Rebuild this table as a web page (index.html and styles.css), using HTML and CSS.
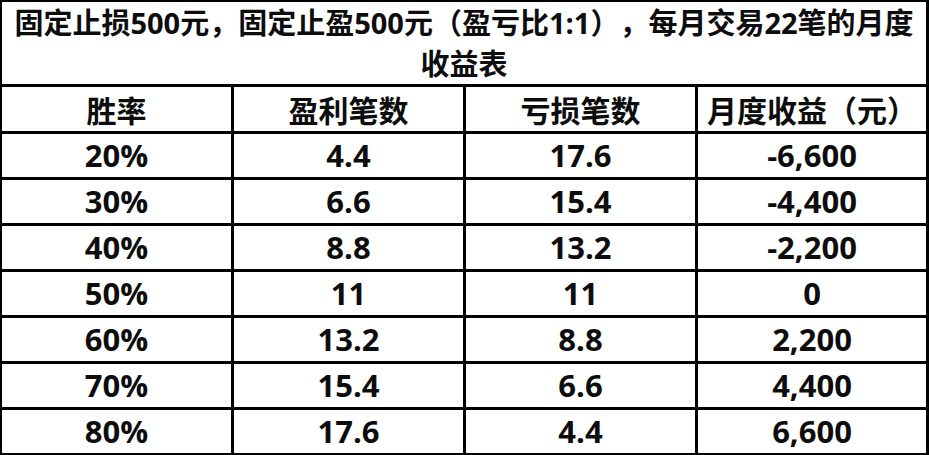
FILE: index.html
```html
<!DOCTYPE html>
<html lang="zh-CN">
<head>
<meta charset="utf-8">
<title>月度收益表</title>
<link rel="stylesheet" href="styles.css">
</head>
<body>
<div class="sheet">
  <div class="cell title">固定止损500元，固定止盈500元（盈亏比1:1），每月交易22笔的月度<br>收益表</div>
  <div class="cell head">胜率</div>
  <div class="cell head">盈利笔数</div>
  <div class="cell head">亏损笔数</div>
  <div class="cell head">月度收益（元）</div>

  <div class="cell">20%</div><div class="cell">4.4</div><div class="cell">17.6</div><div class="cell">-6,600</div>
  <div class="cell">30%</div><div class="cell">6.6</div><div class="cell">15.4</div><div class="cell">-4,400</div>
  <div class="cell">40%</div><div class="cell">8.8</div><div class="cell">13.2</div><div class="cell">-2,200</div>
  <div class="cell">50%</div><div class="cell">11</div><div class="cell">11</div><div class="cell">0</div>
  <div class="cell">60%</div><div class="cell">13.2</div><div class="cell">8.8</div><div class="cell">2,200</div>
  <div class="cell">70%</div><div class="cell">15.4</div><div class="cell">6.6</div><div class="cell">4,400</div>
  <div class="cell">80%</div><div class="cell">17.6</div><div class="cell">4.4</div><div class="cell">6,600</div>
</div>
</body>
</html>
```

FILE: styles.css
```css
html, body {
  margin: 0;
  padding: 0;
  background: #ffffff;
}

.sheet {
  width: 929px;
  height: 455px;
  box-sizing: border-box;
  padding: 2px 3px 2px 2px;
  background: #000000;
  display: grid;
  grid-template-columns: 229px 229px 229px 228px;
  grid-template-rows: 82px 44px repeat(7, 43px);
  gap: 3px;
  font-family: "Open Sans", "Noto Sans CJK SC", sans-serif;
  font-weight: 700;
  color: #0d0d0d;
  text-spacing-trim: space-all;
}

.cell {
  background: #ffffff;
  display: flex;
  align-items: center;
  justify-content: center;
  text-align: center;
  font-size: 31px;
  line-height: 1;
  white-space: nowrap;
}

.title {
  grid-column: 1 / -1;
  font-size: 29px;
  line-height: 41px;
  font-family: "Open Sans", "Noto Sans CJK SC", sans-serif;
}

.head {
  font-family: "Noto Sans CJK SC", sans-serif;
  font-size: 30px;
}
```
